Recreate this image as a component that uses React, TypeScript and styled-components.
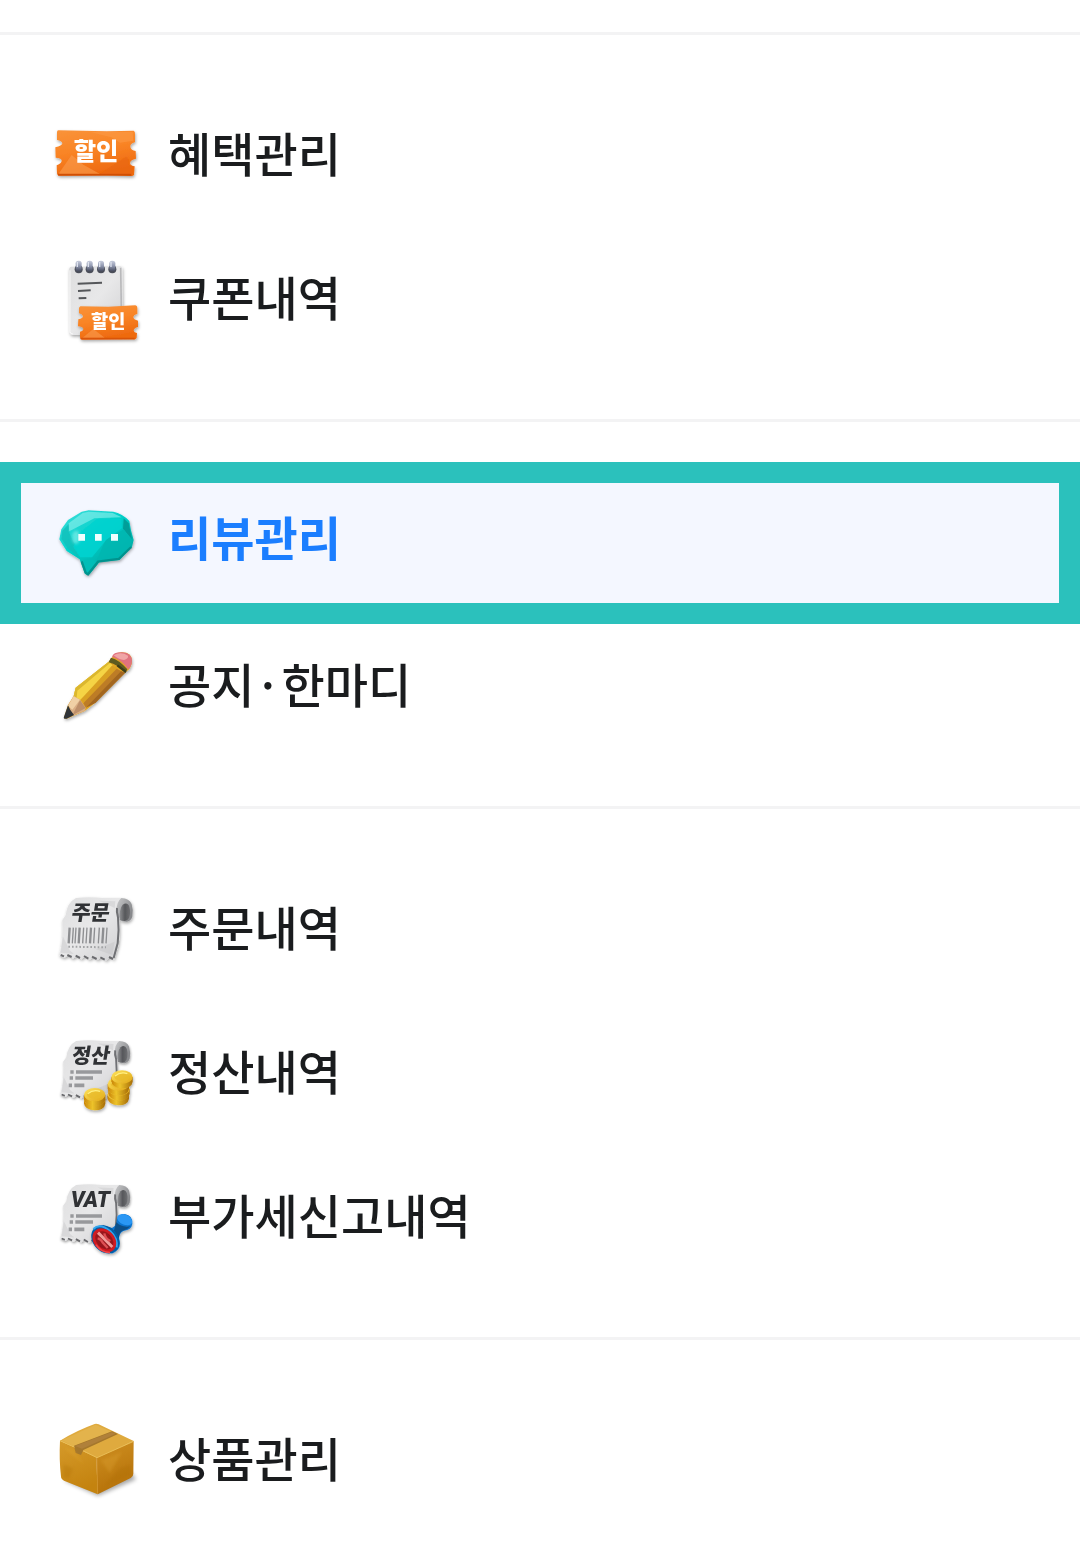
import React from "react";
import styled, { createGlobalStyle, css } from "styled-components";

const GlobalStyle = createGlobalStyle`
  *, *::before, *::after { box-sizing: border-box; }
  body {
    margin: 0;
    background: #ffffff;
    color: #1a1c1e;
    font-family: "Noto Sans CJK KR", "Noto Sans", sans-serif;
  }
`;

const Sidebar = styled.nav`
  padding-top: 32px;
  overflow: hidden;
`;

const MenuGroup = styled.ul`
  margin: 0;
  padding: 48px 0;
  list-style: none;
  border-top: 3px solid #f3f3f4;
`;

const MenuItem = styled.li`
  display: flex;
`;

const Label = styled.span<{ $active?: boolean }>`
  padding-bottom: ${({ $active }) => ($active ? 10 : 6)}px;
`;

const MenuLink = styled.a<{ $active?: boolean }>`
  flex: 1;
  display: flex;
  align-items: center;
  gap: 24px;
  height: 144px;
  padding: 0 48px;
  color: inherit;
  font-size: 47px;
  line-height: 64px;
  font-weight: 500;
  text-decoration: none;
  white-space: nowrap;

  ${({ $active }) =>
    $active &&
    css`
      height: 162px;
      margin: -8px 0 -10px;
      padding: 0 27px 4px;
      border: 21px solid #2bc1bc;
      background: #f4f7ff;
      color: #1b7eff;
      font-weight: 700;
    `}
`;

const IconCanvas = styled.svg`
  flex: none;
  width: 96px;
  height: 96px;
  overflow: visible;
`;

const IconText = styled.text`
  font-family: "Noto Sans CJK KR", "Noto Sans", sans-serif;
  font-weight: 900;
`;

const Latin = styled.text`
  font-family: Roboto, "Liberation Sans", sans-serif;
  font-weight: 900;
  font-style: italic;
`;

const PaintDefs = styled.svg`
  position: absolute;
`;

function SharedPaint() {
  return (
    <PaintDefs width="0" height="0" aria-hidden="true">
      <defs>
        <linearGradient id="orange" x1="0" y1="0" x2="0.3" y2="1">
          <stop offset="0" stopColor="#f9933a" />
          <stop offset="0.5" stopColor="#f98425" />
          <stop offset="1" stopColor="#ee6a10" />
        </linearGradient>
        <linearGradient id="paper" x1="0" y1="0" x2="1" y2="1">
          <stop offset="0" stopColor="#dededf" />
          <stop offset="0.5" stopColor="#e8e8e9" />
          <stop offset="1" stopColor="#d0d0d2" />
        </linearGradient>
        <linearGradient id="curl" x1="0" y1="0" x2="1" y2="0.5">
          <stop offset="0" stopColor="#dcdcdd" />
          <stop offset="0.5" stopColor="#b2b3b5" />
          <stop offset="1" stopColor="#88898c" />
        </linearGradient>
        <linearGradient id="curlInside" x1="0" y1="0" x2="1" y2="0">
          <stop offset="0" stopColor="#8c8d90" />
          <stop offset="0.5" stopColor="#56575a" />
          <stop offset="1" stopColor="#6f7073" />
        </linearGradient>
        <linearGradient id="teal" x1="0" y1="0" x2="0.8" y2="1">
          <stop offset="0" stopColor="#43e0dc" />
          <stop offset="0.45" stopColor="#00d0ca" />
          <stop offset="1" stopColor="#009f99" />
        </linearGradient>
        <linearGradient id="coin" x1="0" y1="0" x2="1" y2="1">
          <stop offset="0" stopColor="#ffe35c" />
          <stop offset="1" stopColor="#dfa716" />
        </linearGradient>
        <linearGradient id="coinSide" x1="0" y1="0" x2="1" y2="0">
          <stop offset="0" stopColor="#c98508" />
          <stop offset="0.4" stopColor="#edc32b" />
          <stop offset="1" stopColor="#a66c06" />
        </linearGradient>
        <linearGradient id="ring" x1="0" y1="0" x2="0" y2="1">
          <stop offset="0" stopColor="#c9cede" />
          <stop offset="0.5" stopColor="#8f96ae" />
          <stop offset="1" stopColor="#44495c" />
        </linearGradient>
        <linearGradient id="boxLeft" x1="0" y1="0" x2="0.3" y2="1">
          <stop offset="0" stopColor="#d59a2a" />
          <stop offset="1" stopColor="#c4830f" />
        </linearGradient>
        <linearGradient id="boxRight" x1="0" y1="0" x2="0.3" y2="1">
          <stop offset="0" stopColor="#cf9022" />
          <stop offset="1" stopColor="#b67209" />
        </linearGradient>
        <filter id="shadow" x="-20%" y="-20%" width="140%" height="150%">
          <feDropShadow dx="2" dy="5" stdDeviation="4" floodColor="#000" floodOpacity="0.35" />
        </filter>
        <filter id="soft" x="-30%" y="-30%" width="160%" height="160%">
          <feGaussianBlur stdDeviation="2" />
        </filter>
        <filter id="facet" x="-30%" y="-30%" width="160%" height="160%">
          <feGaussianBlur stdDeviation="4" />
        </filter>
        <filter id="ground" x="-40%" y="-60%" width="180%" height="220%">
          <feGaussianBlur stdDeviation="6" />
        </filter>
      </defs>
    </PaintDefs>
  );
}

function TicketIcon() {
  return (
    <IconCanvas viewBox="24 -9 288 288" aria-hidden="true">
      <g filter="url(#shadow)">
        <path d="M55 61 L200 64 L281 62 Q286 64 285 72 L285 97 Q270 100 271 111 Q273 121 287 123 L288 146 Q270 149 270 160 Q272 168 284 169 L282 194 Q280 199 272 198 L200 196 L60 197 Q51 197 51 190 L50 166 Q66 160 65 151 Q63 143 47 143 L46 112 Q66 108 67 100 Q66 93 51 90 L51 67 Q51 61 55 61Z" fill="url(#orange)" />
      </g>
      <g filter="url(#soft)">
        <path d="M150 66 L278 66 L280 92 L240 98 L214 82Z" fill="#fb9a45" opacity="0.6" />
        <path d="M58 188 L95 135 L130 164 L180 192 L58 192Z" fill="#fa9c50" opacity="0.6" />
        <path d="M180 192 L258 140 L266 148 L266 165 L278 174 L276 193Z" fill="#e86510" opacity="0.6" />
        <path d="M54 194 L274 194" stroke="#c94806" strokeWidth="6" opacity="0.8" />
      </g>
      <IconText x="101" y="150" fontSize="73" fill="#fff" fontWeight="700">할인</IconText>
    </IconCanvas>
  );
}

function CouponPadIcon() {
  return (
    <IconCanvas viewBox="24 18 288 288" aria-hidden="true">
      <g filter="url(#shadow)">
        <path d="M94 65 L240 63 Q248 64 247 75 L249 262 Q246 271 236 270 L99 270 Q88 269 89 258 L87 75 Q87 66 94 65Z" fill="url(#paper)" />
      </g>
      <path d="M242 68 L244 190" stroke="#b9b9bb" strokeWidth="5" />
      <path d="M90 76 L90 260 Q91 267 99 267" fill="none" stroke="#f8f8f8" strokeWidth="3" />
      {[116, 149, 183, 217].map((x) => (
        <g key={x}>
          <circle cx={x} cy="73" r="12" fill="#4b4e59" />
          <rect x={x - 9} y="47" width="18" height="32" rx="8" fill="url(#ring)" />
          <path d={`M${x - 4} 51 L${x - 4} 66`} stroke="#dfe3ee" strokeWidth="4" />
        </g>
      ))}
      <path d="M113 116 L186 113 M114 138 L152 136 M116 160 L139 159" stroke="#55575a" strokeWidth="6" />
      <g filter="url(#shadow)">
        <path d="M121 184 L205 185 L286 181 Q292 182 292 188 L292 207 Q280 210 280 217 Q282 225 294 227 L294 246 Q281 249 281 257 Q282 263 291 264 L290 278 Q288 284 280 283 L126 284 Q119 283 120 276 L120 260 Q130 258 130 251 Q128 245 114 244 L115 223 Q130 220 129 213 Q127 207 117 205 L117 188Z" fill="url(#orange)" />
      </g>
      <path d="M128 278 L160 252 L194 278Z" fill="#fa9c50" opacity="0.6" filter="url(#soft)" />
      <path d="M122 281 L284 281" stroke="#d04b07" strokeWidth="5" opacity="0.7" />
      <IconText x="153" y="248" fontSize="56" fill="#fff">할인</IconText>
    </IconCanvas>
  );
}

function ReviewIcon() {
  return (
    <IconCanvas viewBox="144 129 288 288" aria-hidden="true">
      <g filter="url(#shadow)">
        <path d="M245 185 L266 181 L340 185 Q367 190 388 213 L393 241 L401 270 L396 291 L359 330 L298 337 L270 371 Q262 380 254 370 L239 328 L200 303 L178 268 L184 238 L204 210Z" fill="url(#teal)" />
      </g>
      <g filter="url(#soft)">
        <path d="M248 189 L266 185 L338 189 L365 202 L283 205 L205 245 L206 220Z" fill="#8df0ec" opacity="0.6" />
        <path d="M206 222 L187 242 L184 266 L204 297 L241 324 L226 286 L208 249Z" fill="#16bdb8" opacity="0.75" />
        <path d="M371 205 L386 220 L396 268 L369 236Z" fill="#00958e" opacity="0.8" />
        <path d="M371 238 L395 272 L389 290 L355 324 L290 331 L316 270Z" fill="#00b6b0" opacity="0.85" />
        <path d="M290 207 L364 207 L366 234 L319 269 L276 322 L240 322 L220 290 L238 250Z" fill="#00d3cf" opacity="0.9" />
        <path d="M243 330 L278 328 L291 338 L262 370Z" fill="#06bdb7" />
        <path d="M245 334 L257 368 L264 373 L294 335 L356 327 L394 291" fill="none" stroke="#008c87" strokeWidth="7" opacity="0.8" />
      </g>
      <ellipse cx="228" cy="262" rx="12" ry="20" fill="#9ff5f1" opacity="0.55" filter="url(#facet)" />
      <path d="M235 252h20v20h-20z M285 252h20v20h-20z M333 252h21v20h-21z" fill="#effffe" />
    </IconCanvas>
  );
}

function PencilIcon() {
  return (
    <IconCanvas viewBox="24 -6 288 288" aria-hidden="true">
      <g filter="url(#shadow)">
        <path d="M72 232 L84 195 L101 168 L107 143 L205 66 Q226 36 246 37 Q276 37 276 63 Q276 85 255 98 L166 188 L134 213 L80 236 Q70 237 72 232Z" fill="#e0a424" />
      </g>
      <path d="M101 169 L107 143 L206 65 L224 81 L121 180Z" fill="#f5d445" />
      <path d="M101 169 L107 143 L206 65 L210 69 L112 152 L110 173Z" fill="#dbb72f" />
      <path d="M217 76 L236 88 L145 194 L121 180Z" fill="#d9a022" />
      <path d="M230 86 L247 95 L167 187 L137 202 L130 190Z" fill="#bd7c26" />
      <path d="M243 94 L256 98 L167 188 L137 204Z" fill="#a2661f" />
      <path d="M85 195 L101 168 L121 180 L137 204 L134 213 L97 228Z" fill="#d9ae84" />
      <path d="M101 169 L120 179 L97 209 L84 197Z" fill="#f0d0a5" />
      <path d="M120 181 L137 204 L97 226Z" fill="#bd8f6a" />
      <path d="M84 196 Q90 212 102 225 L80 236 Q69 238 72 230Z" fill="#303438" />
      <path d="M216 50 Q220 36 247 37 Q276 39 276 64 Q275 80 264 88 Q250 62 216 50Z" fill="#e0727e" />
      <path d="M221 46 Q242 33 264 47 Q266 56 252 60 Q235 58 221 46Z" fill="#f0a5a6" />
      <path d="M213 53 Q237 59 262 88 L256 99 Q234 74 206 67Z" fill="#5e5b20" />
      <path d="M232 76 L258 96" stroke="#3c3d18" strokeWidth="7" />
    </IconCanvas>
  );
}

function Receipt() {
  return (
    <>
      <g filter="url(#shadow)">
        <path d="M210 54 L244 54 Q268 55 275 72 Q281 92 277 110 Q272 124 260 125 L246 124 Q228 100 226 80Z" fill="url(#curl)" />
        <path d="M240 121 Q237 86 248 74 Q262 64 268 80 Q273 98 267 114 Q262 123 254 123Z" fill="url(#curlInside)" />
        <path d="M108 54 Q146 49 190 54 L244 54 Q229 66 230 92 Q240 122 239 150 Q239 180 234 200 L222 239 L211 230 L199 242 L186 232 L173 240 L161 230 L149 239 L137 228 L124 238 L112 227 L99 236 L87 226 L72 233 L57 225 L62 206 Q70 162 67 120 L77 106 Q81 68 108 54Z" fill="url(#paper)" />
      </g>
      <path d="M231 84 Q229 96 234 112 Q238 150 233 190 L221 234" fill="none" stroke="#707174" strokeWidth="6" filter="url(#soft)" />
      <path d="M69 170 L62 218 L102 222 L89 211Z M176 62 L226 64 L224 84 L210 77Z M168 208 L224 185 L217 225Z" fill="#bdbec0" opacity="0.35" />
      <path d="M62 225 l10 4 M82 225 l13 6 M107 227 l13 7 M132 228 l13 8 M156 230 l14 7 M181 232 l13 7 M207 231 l12 6" stroke="#6a6b6e" strokeWidth="6" filter="url(#soft)" />
    </>
  );
}

function ShortReceipt() {
  return (
    <g transform="translate(6 -3) scale(0.95 0.94)">
      <Receipt />
    </g>
  );
}

function OrderIcon() {
  const bars = [87, 98, 106, 117, 129, 139, 151, 162, 176, 188, 199];
  return (
    <IconCanvas viewBox="24 3 288 288" aria-hidden="true">
      <Receipt />
      <IconText x="91" y="120" fontSize="62" fill="#303235" transform="translate(20 0) skewX(-9)">주문</IconText>
      {bars.map((x, i) => (
        <path key={x} d={`M${x + 2} 143 L${x - 1} 190`} stroke="#8d8e91" strokeWidth={i % 3 === 0 ? 7 : 4} />
      ))}
      <path d="M85 200 L198 202" stroke="#a3a4a6" strokeWidth="6" strokeDasharray="5 6" />
    </IconCanvas>
  );
}

function ReportLines() {
  return (
    <path d="M91 141h10 M108 141h78 M89 159h10 M106 159h53 M86 181h10 M103 181h30" stroke="#98999c" strokeWidth="11" />
  );
}

function Coin({ x, y }: { x: number; y: number }) {
  return (
    <g>
      <path d={`M${x - 32} ${y} v14 q3 18 32 20 q29 -1 32 -20 v-14Z`} fill="url(#coinSide)" />
      <ellipse cx={x} cy={y} rx="32" ry="20" fill="url(#coin)" />
      <ellipse cx={x} cy={y} rx="23" ry="12" fill="#e8bb2b" opacity="0.75" />
      <path d={`M${x - 21} ${y - 3} q17 -14 37 -7`} fill="none" stroke="#fff083" strokeWidth="4" />
    </g>
  );
}

function SettlementIcon() {
  return (
    <IconCanvas viewBox="24 0 288 288" aria-hidden="true">
      <ShortReceipt />
      <IconText x="91" y="114" fontSize="62" fill="#303235" transform="translate(20 0) skewX(-9)">정산</IconText>
      <ReportLines />
      <g filter="url(#shadow)">
        <Coin x={235} y={207} />
        <Coin x={237} y={192} />
        <Coin x={235} y={177} />
        <Coin x={246} y={156} />
        <Coin x={164} y={222} />
        <Coin x={164} y={209} />
      </g>
    </IconCanvas>
  );
}

function VatIcon() {
  return (
    <IconCanvas viewBox="24 -3 288 288" aria-hidden="true">
      <g transform="translate(0 -3)">
        <ShortReceipt />
        <ReportLines />
      </g>
      <Latin x="92" y="112" fontSize="65" fill="#303235">VAT</Latin>
      <g filter="url(#shadow)">
        <path d="M187 166 L216 174 Q231 167 230 150 Q233 132 254 132 Q280 137 277 162 Q274 180 252 182 Q239 187 237 203 L240 220 Q240 242 215 251Z" fill="#0b74cf" />
        <ellipse cx="254" cy="149" rx="24" ry="15" fill="#2997f4" transform="rotate(24 254 149)" />
        <path d="M229 157 Q246 174 272 169 Q260 181 246 183 Q238 187 236 206 L222 181Z" fill="#085088" />
        <ellipse cx="196" cy="208" rx="47" ry="37" fill="#055ea6" transform="rotate(46 196 208)" />
        <path d="M160 177 Q180 158 211 184 Q234 206 230 232" fill="none" stroke="#33a6ee" strokeWidth="6" />
        <ellipse cx="193" cy="211" rx="40" ry="31" fill="#d01a22" transform="rotate(46 193 211)" />
        <ellipse cx="193" cy="211" rx="31" ry="23" fill="#96121a" transform="rotate(46 193 211)" />
      </g>
      <path d="M174 188 L217 231" fill="none" stroke="#f09a98" strokeWidth="9" />
      <path d="M173 205 Q184 207 188 218 L203 234 M193 190 Q195 205 211 213" fill="none" stroke="#df5054" strokeWidth="7" />
      <path d="M168 224 Q182 247 210 248" fill="none" stroke="#f04547" strokeWidth="5" />
    </IconCanvas>
  );
}

function ProductIcon() {
  return (
    <IconCanvas viewBox="24 6 288 288" aria-hidden="true">
      <path d="M70 210 L174 257 L288 208 L270 184Z" fill="#000" opacity="0.35" filter="url(#ground)" />
      <path d="M60 92 L169 141 L173 253 L72 212 Q63 208 63 199 Q57 150 60 92Z" fill="url(#boxLeft)" />
      <path d="M169 141 L281 93 L280 191 Q280 199 272 204 L173 253Z" fill="url(#boxRight)" />
      <path d="M60 92 Q111 61 164 42 Q169 40 176 43 L281 93 L171 143Z" fill="#dfaa3e" />
      <path d="M65 91 L167 44 L213 65 L105 111Z" fill="#e3b34c" />
      <path d="M102 107 L216 64 L234 72 L130 120 L123 135 L107 129Z" fill="#a5772c" />
      <path d="M105 108 L216 66 L227 71 L126 116Z" fill="#b0803a" />
      <path d="M60 92 L103 111 M131 123 L171 143 L281 94" fill="none" stroke="#e9bd55" strokeWidth="3" />
      <path d="M171 144 L173 251" stroke="#d0922a" strokeWidth="3" />
      <g filter="url(#facet)">
        <path d="M70 162 L100 176 L85 206 L70 200Z M190 230 L240 174 L272 164 L272 194Z" fill="#a86907" opacity="0.25" />
        <path d="M70 112 L101 121 L132 163Z M183 151 L246 126 L209 190Z" fill="#efb842" opacity="0.2" />
      </g>
    </IconCanvas>
  );
}

interface Entry {
  label: string;
  Icon: () => React.ReactElement;
  active?: boolean;
}

const groups: Entry[][] = [
  [
    { label: "혜택관리", Icon: TicketIcon },
    { label: "쿠폰내역", Icon: CouponPadIcon },
  ],
  [
    { label: "리뷰관리", Icon: ReviewIcon, active: true },
    { label: "공지·한마디", Icon: PencilIcon },
  ],
  [
    { label: "주문내역", Icon: OrderIcon },
    { label: "정산내역", Icon: SettlementIcon },
    { label: "부가세신고내역", Icon: VatIcon },
  ],
  [{ label: "상품관리", Icon: ProductIcon }],
];

export default function App() {
  return (
    <>
      <GlobalStyle />
      <SharedPaint />
      <Sidebar>
        {groups.map((entries) => (
          <MenuGroup key={entries[0].label}>
            {entries.map(({ label, Icon, active }) => (
              <MenuItem key={label}>
                <MenuLink href="#" $active={active} aria-current={active ? "page" : undefined}>
                  <Icon />
                  <Label $active={active}>{label}</Label>
                </MenuLink>
              </MenuItem>
            ))}
          </MenuGroup>
        ))}
      </Sidebar>
    </>
  );
}
